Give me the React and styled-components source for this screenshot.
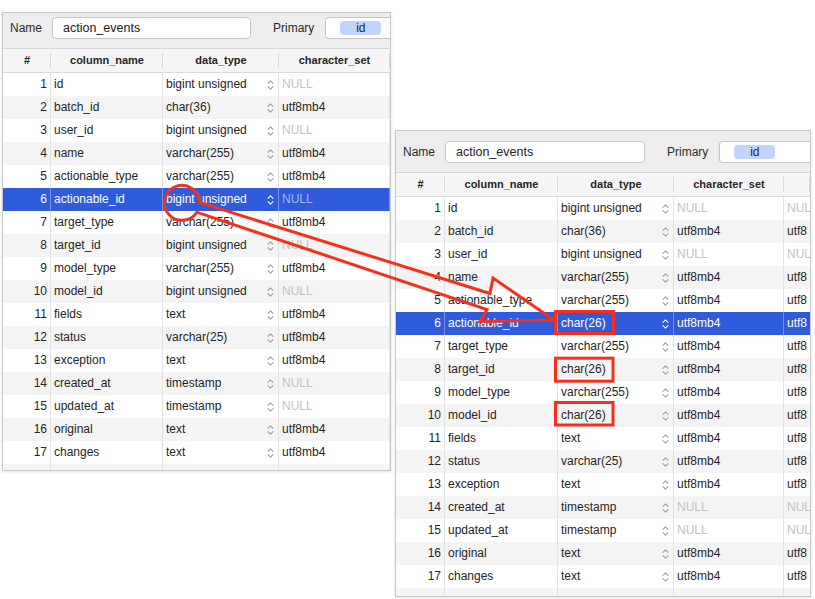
import React from 'react';
import styled, { createGlobalStyle } from 'styled-components';

const GlobalStyle = createGlobalStyle`
  html, body { margin: 0; padding: 0; background: #ffffff; }
  body { font-family: "Liberation Sans", Arial, sans-serif; color: #242424; }
  * { box-sizing: border-box; }
`;

const Canvas = styled.div`
  position: relative;
  width: 815px;
  height: 599px;
  overflow: hidden;
  background: #ffffff;
  display: flex;
  align-items: flex-start;
`;

const Window = styled.div`
  flex: none;
  margin-left: ${p => p.$left}px;
  margin-top: ${p => p.$top}px;
  width: ${p => p.$width}px;
  border: 1px solid #c8c8c8;
  box-shadow: 0 1px 3px rgba(0, 0, 0, 0.12);
  background: #ffffff;
  overflow: hidden;
`;

const NameBar = styled.div`
  display: flex;
  align-items: flex-start;
  padding: ${p => p.$padTop}px 0 9px 7px;
  background: #ededed;
  border-bottom: 1px solid #d5d5d5;
  white-space: nowrap;
  font-size: 12px;
  overflow: hidden;
`;

const Label = styled.span`
  flex: none;
  line-height: 22px;
  color: #2a2a2a;
  margin-left: ${p => p.$gap || 0}px;
`;

const TextInput = styled.div`
  flex: none;
  margin-left: 10px;
  width: ${p => p.$width}px;
  height: 22px;
  line-height: 20px;
  padding-left: 10px;
  background: #ffffff;
  border: 1px solid #c6c6c6;
  border-radius: 4px;
  font-size: 12.5px;
  color: #222;
`;

const TokenField = styled.div`
  flex: none;
  margin-left: 11px;
  width: ${p => p.$width}px;
  height: 22px;
  padding: 3px 0 0 14px;
  background: #ffffff;
  border: 1px solid #c6c6c6;
  border-right: none;
  border-radius: 4px 0 0 4px;
`;

const Token = styled.span`
  display: inline-block;
  width: 41px;
  height: 14px;
  line-height: 14px;
  border-radius: 4px;
  background: #c3d4fa;
  text-align: center;
  font-size: 12px;
  color: #1d2540;
`;

const Row = styled.div`
  display: grid;
  grid-template-columns: ${p => p.$cols};
  height: ${p => p.$h || 23}px;
  background: ${p => (p.$selected ? '#2f5bdc' : p.$alt ? '#f4f4f4' : '#ffffff')};
  color: ${p => (p.$selected ? '#ffffff' : '#242424')};
  font-size: 12px;
  line-height: 23px;
`;

const HeadRow = styled(Row)`
  background: #f5f5f5;
  border-bottom: 1px solid #dadada;
  height: 24px;
  font-weight: bold;
  font-size: 11px;
  color: #262626;
`;

const HeadCell = styled.div`
  position: relative;
  text-align: center;
  white-space: nowrap;
  overflow: hidden;
  &::after {
    content: '';
    position: absolute;
    right: 0;
    top: 4px;
    bottom: 4px;
    width: 1px;
    background: #d9d9d9;
  }
`;

const Cell = styled.div`
  display: flex;
  align-items: center;
  justify-content: ${p => (p.$right ? 'flex-end' : 'space-between')};
  padding: 0 ${p => (p.$right ? 3 : p.$edge ? 0 : 4)}px 0 3px;
  border-right: ${p => (p.$edge ? 'none' : `1px solid ${p.$selected ? 'rgba(255,255,255,0.35)' : '#e2e2e2'}`)};
  white-space: nowrap;
  overflow: hidden;
  font-size: 12px;
  color: ${p => (p.$muted ? (p.$selected ? '#a9b6e6' : '#c2c2c2') : 'inherit')};
`;

const Overlay = styled.svg`
  position: absolute;
  left: 0;
  top: 0;
  pointer-events: none;
`;

const Stepper = ({ light }) => (
  <svg width="7" height="12" viewBox="0 0 7 12" fill="none"
    stroke={light ? '#ffffff' : '#a0a0a0'} strokeWidth="1.1" strokeLinecap="round" strokeLinejoin="round">
    <path d="M1 4.4 L3.5 1.9 L6 4.4" />
    <path d="M1 7.6 L3.5 10.1 L6 7.6" />
  </svg>
);

const baseRows = [
  ['id', 'bigint unsigned', null],
  ['batch_id', 'char(36)', 'utf8mb4'],
  ['user_id', 'bigint unsigned', null],
  ['name', 'varchar(255)', 'utf8mb4'],
  ['actionable_type', 'varchar(255)', 'utf8mb4'],
  ['actionable_id', 'bigint unsigned', null],
  ['target_type', 'varchar(255)', 'utf8mb4'],
  ['target_id', 'bigint unsigned', null],
  ['model_type', 'varchar(255)', 'utf8mb4'],
  ['model_id', 'bigint unsigned', null],
  ['fields', 'text', 'utf8mb4'],
  ['status', 'varchar(25)', 'utf8mb4'],
  ['exception', 'text', 'utf8mb4'],
  ['created_at', 'timestamp', null],
  ['updated_at', 'timestamp', null],
  ['original', 'text', 'utf8mb4'],
  ['changes', 'text', 'utf8mb4'],
];

const changedRows = baseRows.map((r, i) =>
  [5, 7, 9].includes(i) ? [r[0], 'char(26)', 'utf8mb4'] : r
);

const TablePanel = ({ left, top, width, padTop, inputWidth, tokenWidth, cols, rows, extra }) => {
  const tpl = cols.map(c => `${c}px`).join(' ');
  return (
    <Window $left={left} $top={top} $width={width}>
      <NameBar $padTop={padTop}>
        <Label>Name</Label>
        <TextInput $width={inputWidth}>action_events</TextInput>
        <Label $gap={22}>Primary</Label>
        <TokenField $width={tokenWidth}><Token>id</Token></TokenField>
      </NameBar>
      <HeadRow $cols={tpl}>
        <HeadCell>#</HeadCell>
        <HeadCell>column_name</HeadCell>
        <HeadCell>data_type</HeadCell>
        <HeadCell>character_set</HeadCell>
        {extra && <HeadCell />}
      </HeadRow>
      {rows.map((r, i) => {
        const sel = i === 5;
        return (
          <Row key={i} $cols={tpl} $alt={i % 2 === 1} $selected={sel}>
            <Cell $right $selected={sel}>{i + 1}</Cell>
            <Cell $selected={sel}>{r[0]}</Cell>
            <Cell $selected={sel}>{r[1]}<Stepper light={sel} /></Cell>
            <Cell $selected={sel} $muted={!r[2]}>{r[2] || 'NULL'}</Cell>
            {extra && <Cell $edge $selected={sel} $muted={!r[2]}>{r[2] ? 'utf8' : 'NUL'}</Cell>}
          </Row>
        );
      })}
      <Row $cols={tpl} $alt $h={extra ? 8 : 6}>
        <Cell /><Cell /><Cell /><Cell />{extra && <Cell $edge />}
      </Row>
    </Window>
  );
};

export default function App() {
  const red = '#f5301c';
  return (
    <Canvas>
      <GlobalStyle />
      <TablePanel left={2} top={12} width={389} padTop={4} inputWidth={199} tokenWidth={70}
        cols={[48, 112, 116, 111]} rows={baseRows} />
      <TablePanel left={4} top={130} width={416} padTop={10} inputWidth={200} tokenWidth={96}
        cols={[49, 113, 116, 110, 26]} rows={changedRows} extra />
      <Overlay width="815" height="599" viewBox="0 0 815 599">
        <g fill="none" stroke={red} strokeWidth="3" strokeLinejoin="miter">
          <path d="M199.5 202.5 A17.5 17.5 0 1 0 196.8 212.2 L487 309.5 L480 321.5 L554 320 L493 278 L490 293.5 Z" />
          <rect x="555.5" y="311.5" width="58" height="22" />
          <rect x="555.5" y="358.2" width="57.5" height="23" />
          <rect x="555.5" y="402.5" width="57.5" height="22.5" />
        </g>
      </Overlay>
    </Canvas>
  );
}
